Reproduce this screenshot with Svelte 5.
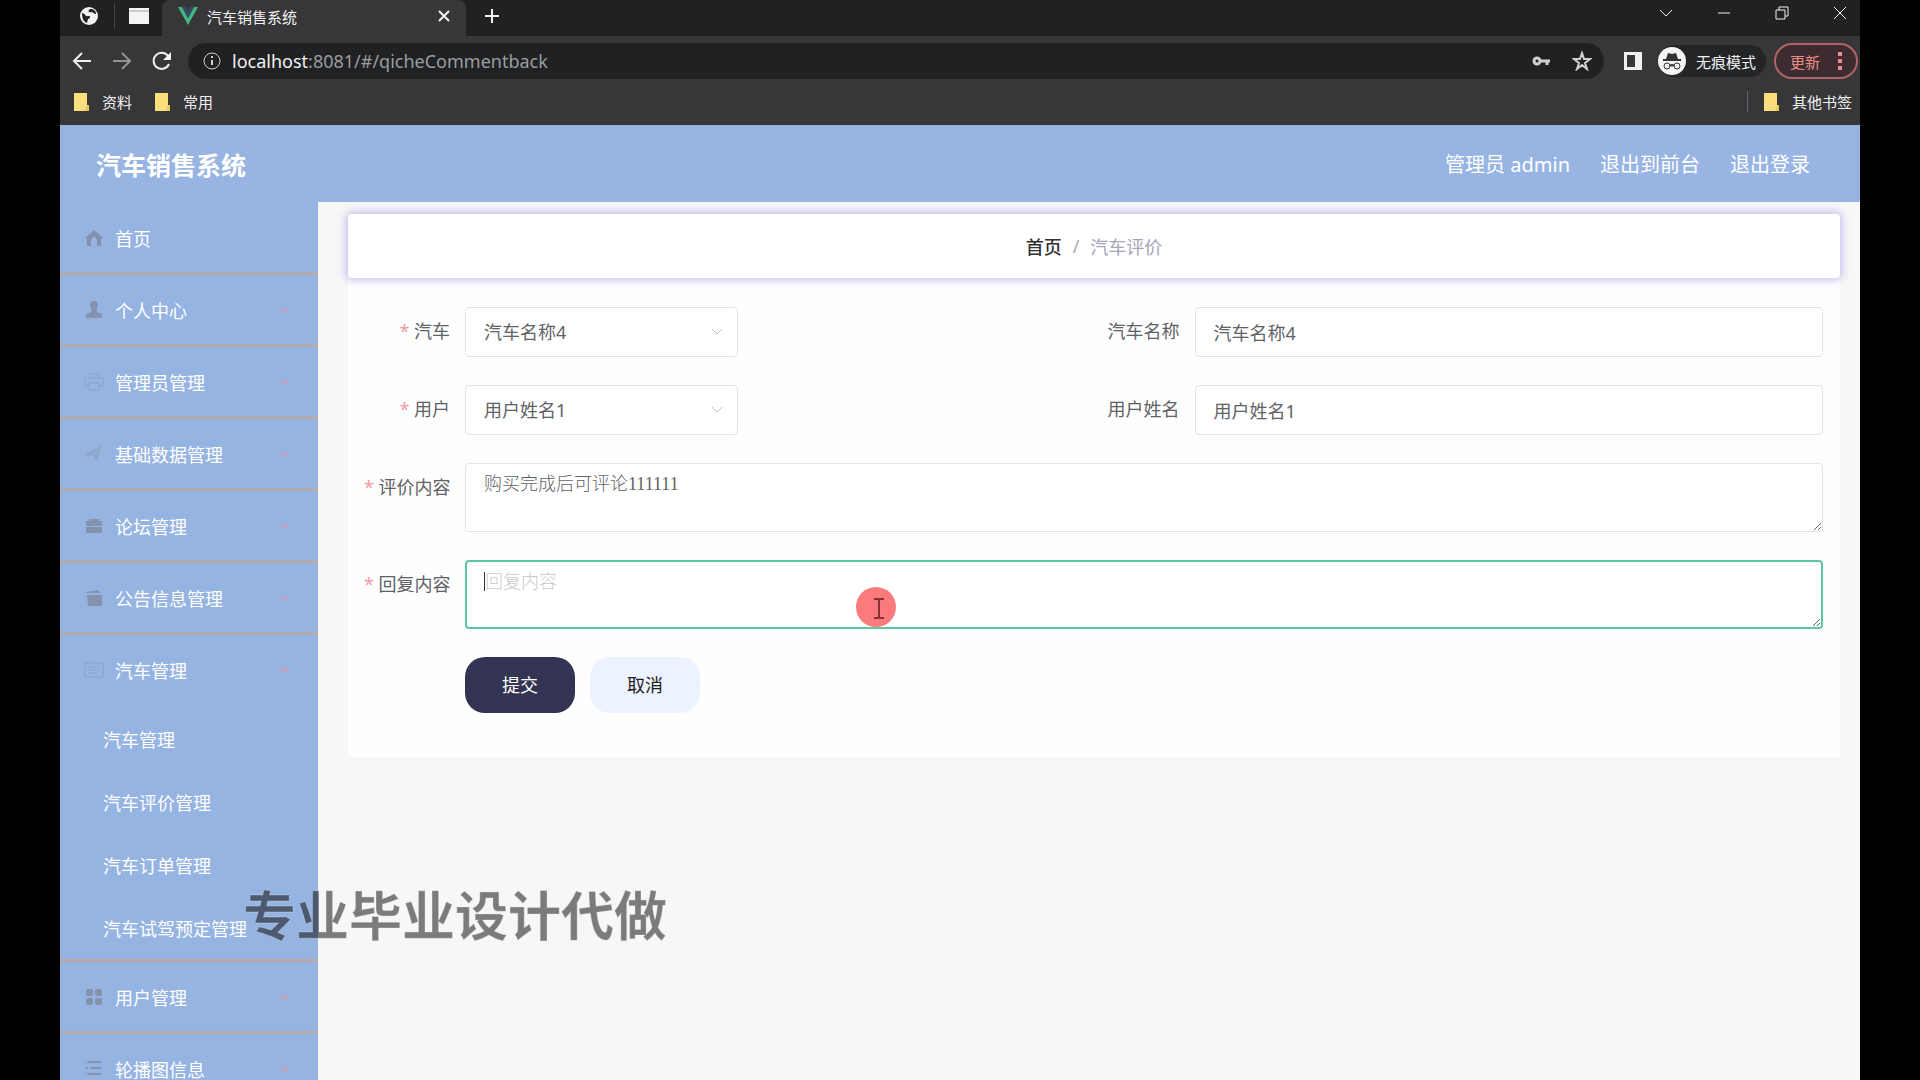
<script lang="ts">
  let car = $state('汽车名称4');
  let user = $state('用户姓名1');
  let comment = $state('购买完成后可评论111111');
  let reply = $state('');

  const menus = [
    { name: '首页', icon: 'home' },
    { name: '个人中心', icon: 'user', arrow: true },
    { name: '管理员管理', icon: 'print', arrow: true },
    { name: '基础数据管理', icon: 'send', arrow: true },
    { name: '论坛管理', icon: 'case', arrow: true },
    { name: '公告信息管理', icon: 'box', arrow: true },
    {
      name: '汽车管理',
      icon: 'card',
      arrow: true,
      open: true,
      children: ['汽车管理', '汽车评价管理', '汽车订单管理', '汽车试驾预定管理']
    },
    { name: '用户管理', icon: 'grid', arrow: true },
    { name: '轮播图信息', icon: 'list', arrow: true }
  ];
</script>

{#snippet folder()}
  <svg width="16" height="20" viewBox="0 0 16 20" aria-hidden="true">
    <path d="M0 1h13v12h2v6H0z" fill="#fbdf7c" />
    <path d="M13 13h2v6h-4z" fill="#e9c95c" />
  </svg>
{/snippet}

{#snippet menuIcon(name: string)}
  <svg class="menu-icon" viewBox="0 0 20 20" fill="currentColor" aria-hidden="true">
    {#if name === 'home'}
      <path d="M10 2 1 10l2 1v7h4v-6l3-4 3 4v6h4v-7l2-1z" />
    {:else if name === 'user'}
      <circle cx="10" cy="5" r="4" />
      <path d="M7 9h6v3l5 2v4H2v-4l5-2z" />
    {:else if name === 'print'}
      <path d="M5 6V2h10v4M5 14H1V6h18v8h-4M5 11h10v7H5z" fill="none" stroke="currentColor" opacity=".5" />
    {:else if name === 'send'}
      <path d="M18 2 1 10l6 2zM18 2 9 13l4 4z" opacity=".5" />
    {:else if name === 'case'}
      <path d="M5 5V3h10v2h3v5H2V5zM2 11h16v6H2z" />
    {:else if name === 'box'}
      <path d="m2 4 12-2 3 3H2zM3 7h15v11H4z" />
    {:else if name === 'card'}
      <path d="M1 3h18v14H1zM5 7h10M5 10h10M5 13h6" fill="none" stroke="currentColor" opacity=".5" />
    {:else if name === 'grid'}
      <rect x="2" y="2" width="7" height="7" rx="2" />
      <rect x="11" y="2" width="7" height="7" rx="2" />
      <rect x="2" y="11" width="7" height="7" rx="2" />
      <rect x="11" y="11" width="7" height="7" rx="2" />
    {:else}
      <path d="M4 3h13M2 3h1M6 9h11M2 9h2M4 15h13M2 15h1" fill="none" stroke="currentColor" stroke-width="2" />
    {/if}
  </svg>
{/snippet}

<div class="window">
  <div class="tabs">
    <button class="pinned" aria-label="固定标签页">
      <svg width="20" height="20" viewBox="0 0 20 20">
        <circle cx="10" cy="10" r="9" fill="#f1f1f1" />
        <path d="M3 7c3 0 3 4 7 3 2 0 1 3-1 3l-1 4c-3-1-5-4-5-10zM11 3c-2 1-2 4 1 3 2 0 3 2 5 2 0-3-2-5-6-5z" fill="#222423" />
      </svg>
    </button>
    <button class="pinned second" aria-label="固定标签页">
      <svg width="20" height="16" viewBox="0 0 20 16"><path d="M0 0h20v16H0z" fill="#f4f4f4" /><path d="M0 3h20" stroke="#ccc" /></svg>
    </button>
    <div class="tab">
      <svg width="20" height="18" viewBox="0 0 20 18" aria-hidden="true">
        <path d="M0 0h4l6 11 6-11h4L10 18z" fill="#41b883" />
        <path d="M4 0h4l2 4 2-4h4l-6 11z" fill="#35495e" />
      </svg>
      <span>汽车销售系统</span>
      <button aria-label="关闭标签页">
        <svg width="12" height="12" viewBox="0 0 12 12"><path d="m1 1 10 10M11 1 1 11" /></svg>
      </button>
    </div>
    <button class="new-tab" aria-label="新标签页">
      <svg width="16" height="16" viewBox="0 0 16 16"><path d="M8 1v14M1 8h14" /></svg>
    </button>
    <div class="controls">
      <button aria-label="搜索标签页"><svg width="14" height="14" viewBox="0 0 14 14"><path d="m1 4 6 6 6-6" /></svg></button>
      <button aria-label="最小化"><svg width="14" height="14" viewBox="0 0 14 14"><path d="M1 7h12" /></svg></button>
      <button aria-label="还原"><svg width="14" height="14" viewBox="0 0 14 14"><path d="M1 4h9v9H1zM4 4V1h9v9h-3" /></svg></button>
      <button aria-label="关闭"><svg width="14" height="14" viewBox="0 0 14 14"><path d="m1 1 12 12M13 1 1 13" /></svg></button>
    </div>
  </div>

  <div class="toolbar">
    <button aria-label="后退"><svg width="20" height="20" viewBox="0 0 20 20"><path d="M19 10H3M10 2l-8 8 8 8" /></svg></button>
    <button class="dim" aria-label="前进"><svg width="20" height="20" viewBox="0 0 20 20"><path d="M1 10h16M10 2l8 8-8 8" /></svg></button>
    <button aria-label="刷新">
      <svg width="20" height="20" viewBox="0 0 20 20"><path d="M17 13a8 8 0 1 1-1-8l2 2" /><path d="M19 1v8h-8z" fill="#f1f1f1" stroke="none" /></svg>
    </button>
    <div class="address">
      <svg width="18" height="18" viewBox="0 0 18 18"><circle cx="9" cy="9" r="8" /><path d="M9 8v5M9 4v2" stroke-width="2" /></svg>
      <div class="url"><b>localhost</b>:8081/#/qicheCommentback</div>
      <svg class="key" width="18" height="12" viewBox="0 0 18 12"><circle cx="5" cy="6" r="3" stroke-width="3" /><path d="M8 6h10M15 6v4" stroke-width="3" /></svg>
      <svg class="star" width="20" height="20" viewBox="0 0 20 20"><path d="m10 2 2 6h6l-5 4 2 6-5-4-5 4 2-6-5-4h6z" /></svg>
    </div>
    <button class="panel" aria-label="侧边栏">
      <svg width="18" height="18" viewBox="0 0 18 18"><path d="M0 0h18v18H0zM3 3v12h8V3z" fill="#f1f1f1" fill-rule="evenodd" stroke="none" /></svg>
    </button>
    <div class="incognito">
      <svg width="28" height="28" viewBox="0 0 28 28">
        <circle cx="14" cy="14" r="14" fill="#f4f4f4" stroke="none" />
        <path d="m10 6 4 1 4-1 2 6H8z" fill="#333" stroke="none" />
        <path d="M5 13h18M12 19q2-2 4 0" stroke="#333" stroke-width="2" />
        <circle cx="9" cy="19" r="3" stroke="#333" stroke-width="1" /><circle cx="19" cy="19" r="3" stroke="#333" stroke-width="1" />
      </svg>
      <span>无痕模式</span>
    </div>
    <button class="update">
      更新
      <svg width="4" height="18" viewBox="0 0 4 18"><path d="M0 0h4v4H0zM0 7h4v4H0zM0 14h4v4H0z" fill="#ea8b86" stroke="none" /></svg>
    </button>
  </div>

  <div class="bookmarks">
    <a href="#/">{@render folder()}资料</a>
    <a href="#/">{@render folder()}常用</a>
    <a class="other" href="#/">{@render folder()}其他书签</a>
  </div>

  <header>
    <h1>汽车销售系统</h1>
    <nav>
      <span>管理员 admin</span>
      <a href="#/front">退出到前台</a>
      <a href="#/login">退出登录</a>
    </nav>
  </header>

  <div class="body">
    <aside>
      {#each menus as menu (menu.name)}
        <a class="menu" class:open={menu.open} href="#/">
          {@render menuIcon(menu.icon)}
          <span>{menu.name}</span>
          {#if menu.arrow}
            <svg class="arrow" class:up={menu.open} width="10" height="6" viewBox="0 0 10 6" aria-hidden="true"><path d="m1 1 4 4 4-4" /></svg>
          {/if}
        </a>
        {#if menu.children}
          <div class="submenu">
            {#each menu.children as child (child)}
              <a href="#/qicheCommentback">{child}</a>
            {/each}
          </div>
        {/if}
      {/each}
    </aside>

    <main>
      <div class="breadcrumb">
        <a href="#/">首页</a>
        <i>/</i>
        <span>汽车评价</span>
      </div>
      <form>
        <div class="pair">
          <div class="field">
            <label class="required" for="car">汽车</label>
            <div class="select">
              <select id="car" bind:value={car}>
                <option>汽车名称4</option>
              </select>
              <svg width="12" height="8" viewBox="0 0 12 8" aria-hidden="true"><path d="m1 1 5 5 5-5" /></svg>
            </div>
          </div>
          <div class="field">
            <label for="car-name">汽车名称</label>
            <input id="car-name" value={car} readonly />
          </div>
        </div>
        <div class="pair">
          <div class="field">
            <label class="required" for="user">用户</label>
            <div class="select">
              <select id="user" bind:value={user}>
                <option>用户姓名1</option>
              </select>
              <svg width="12" height="8" viewBox="0 0 12 8" aria-hidden="true"><path d="m1 1 5 5 5-5" /></svg>
            </div>
          </div>
          <div class="field">
            <label for="user-name">用户姓名</label>
            <input id="user-name" value={user} readonly />
          </div>
        </div>
        <div class="field">
          <label class="required" for="comment">评价内容</label>
          <textarea id="comment" bind:value={comment}></textarea>
        </div>
        <div class="field active">
          <label class="required" for="reply">回复内容</label>
          <textarea id="reply" placeholder="回复内容" bind:value={reply}></textarea>
          <span class="caret"></span>
          <svg class="pointer" width="40" height="40" viewBox="0 0 40 40" aria-hidden="true">
            <circle cx="20" cy="20" r="20" fill="#fb7b7c" />
            <path d="M18 12h4l1 1 1-1h4M18 31h4l1-1 1 1h4M23 13v17" fill="none" stroke="#8a2f38" stroke-width="2" />
          </svg>
        </div>
        <div class="actions">
          <button type="button" class="submit">提交</button>
          <button type="button" class="cancel">取消</button>
        </div>
      </form>
    </main>
  </div>

  <div class="watermark">专业毕业设计代做</div>
</div>

<style>
  :global(body) {
    background: #000;
    overflow: hidden;
  }

  .window {
    position: relative;
    display: flex;
    flex-direction: column;
    box-sizing: border-box;
    height: 100vh;
    margin: 0 60px;
    overflow: hidden;
    background: #f7f7f7;
    font-family: 'Noto Sans', 'Noto Sans CJK SC', sans-serif;
    font-size: 18px;
  }

  .window * {
    box-sizing: border-box;
  }

  button,
  input,
  select,
  textarea {
    font: inherit;
  }

  a {
    color: inherit;
    text-decoration: none;
  }

  .tabs,
  .toolbar,
  .bookmarks {
    display: flex;
    flex: none;
    align-items: center;
    color: #f1f1f1;
    font-size: 15px;
  }

  .tabs button,
  .toolbar button {
    display: flex;
    align-items: center;
    justify-content: center;
    padding: 0;
    border: 0;
    background: none;
    color: inherit;
  }

  .tabs {
    height: 36px;
    background: #1f2221;
  }

  .tabs svg,
  .toolbar svg {
    flex: none;
    fill: none;
    stroke: #f1f1f1;
    stroke-width: 2;
  }

  .tab > svg,
  .tabs .pinned svg {
    stroke: none;
  }

  .tabs .pinned {
    width: 54px;
    height: 26px;
    margin-bottom: 4px;
    padding-left: 3px;
  }

  .tabs .second {
    width: 48px;
    padding: 0;
    border-left: 1px solid #444;
  }

  .tab {
    display: flex;
    align-items: center;
    gap: 9px;
    width: 304px;
    height: 36px;
    padding: 0 16px 4px;
    border-radius: 8px 8px 0 0;
    background: #37373a;
  }

  .tab button {
    margin-left: auto;
  }

  .tabs .new-tab {
    width: 52px;
    padding-bottom: 4px;
  }

  .controls {
    display: flex;
    gap: 44px;
    margin-left: auto;
    padding: 0 13px 10px 0;
  }

  .controls svg {
    stroke-width: 1;
  }

  .toolbar {
    gap: 20px;
    height: 50px;
    padding: 0 2px 0 12px;
    background: #37373a;
  }

  .toolbar .dim {
    opacity: 0.5;
  }

  .address {
    display: flex;
    flex: 1;
    align-items: center;
    gap: 11px;
    height: 36px;
    margin-left: -4px;
    padding: 0 12px 0 15px;
    border-radius: 18px;
    background: #202123;
  }

  .address svg {
    stroke: #d0d0d0;
    stroke-width: 1;
  }

  .address .star {
    stroke-width: 2;
  }

  .address .key {
    margin-right: 11px;
  }

  .url {
    flex: 1;
    color: #9b9c9e;
    font-size: 18px;
  }

  .url b {
    color: #f1f1f1;
    font-weight: 400;
  }

  .toolbar .update {
    gap: 18px;
    width: 84px;
    height: 36px;
    margin-left: -12px;
    border: 2px solid #b06468;
    border-radius: 18px;
    background: #3c2c2f;
    color: #ea8b86;
  }

  .incognito {
    display: flex;
    align-items: center;
    gap: 10px;
    height: 32px;
    margin-left: -4px;
    padding-right: 10px;
    border-radius: 16px;
    background: #242527;
  }

  .bookmarks {
    gap: 23px;
    height: 39px;
    padding: 0 8px 8px 14px;
    background: #37373a;
  }

  .bookmarks a {
    display: flex;
    align-items: center;
    gap: 12px;
  }

  .bookmarks .other {
    margin-left: auto;
    padding-left: 16px;
    border-left: 1px solid #66666a;
  }

  header {
    display: flex;
    flex: none;
    align-items: center;
    justify-content: space-between;
    height: 77px;
    padding: 0 50px 0 36px;
    background: #98b4e2;
    color: #fff;
  }

  h1 {
    margin: 0;
    font-size: 25px;
  }

  nav {
    display: flex;
    gap: 30px;
    font-size: 20px;
  }

  .body {
    display: flex;
    flex: 1;
    min-height: 0;
  }

  aside {
    flex: none;
    width: 258px;
    padding-top: 1px;
    background: #96b4e2;
    color: #fff;
  }

  .menu {
    display: flex;
    align-items: center;
    height: 72px;
    padding: 0 28px 0 24px;
    border-bottom: 3px solid #b3abb0;
  }

  .menu.open {
    border-bottom-color: transparent;
  }

  .menu-icon {
    width: 20px;
    height: 20px;
    margin-right: 11px;
    color: #8492ad;
  }

  .arrow {
    margin-left: auto;
    fill: none;
    stroke: #c79eb8;
    stroke-width: 2;
  }

  .arrow.up {
    transform: rotate(180deg);
  }

  .submenu {
    border-bottom: 3px solid #b8a9a5;
  }

  .submenu a {
    display: flex;
    align-items: center;
    height: 63px;
    padding-left: 43px;
  }

  main {
    flex: 1;
    min-width: 0;
    padding: 12px 20px 0 30px;
  }

  .breadcrumb {
    position: relative;
    display: flex;
    align-items: center;
    justify-content: center;
    gap: 11px;
    height: 64px;
    border-radius: 4px;
    background: #fff;
    box-shadow: 0 0 8px 2px #c3bcee;
    color: #a5a5b8;
  }

  .breadcrumb a {
    color: #303133;
    font-weight: 500;
  }

  .breadcrumb i {
    color: #a8abb2;
    font-style: normal;
  }

  form {
    display: grid;
    gap: 28px;
    padding: 29px 17px 44px 16px;
    background: #fefefe;
    color: #606266;
  }

  .pair {
    display: grid;
    grid-template-columns: 1fr 1fr;
  }

  .field {
    position: relative;
    display: flex;
  }

  label {
    flex: none;
    width: 101px;
    padding-right: 15px;
    line-height: 48px;
    text-align: right;
    white-space: nowrap;
  }

  .required::before {
    content: '* ';
    color: #f39aa8;
  }

  input,
  select,
  textarea {
    width: 100%;
    height: 50px;
    padding: 0 18px;
    border: 1px solid #e2e3e6;
    border-radius: 4px;
    outline: none;
    background: #fff;
    color: #606266;
  }

  select {
    appearance: none;
  }

  textarea {
    height: 69px;
    padding: 7px 18px;
    font-family: 'Liberation Serif', 'Noto Sans CJK SC', serif;
    font-weight: 300;
    line-height: 27px;
    resize: vertical;
  }

  textarea::placeholder {
    color: #c8cacf;
  }

  .active textarea {
    border: 2px solid #5cc7a0;
  }

  .select {
    position: relative;
    width: 273px;
  }

  .select svg {
    position: absolute;
    top: 21px;
    right: 15px;
    fill: none;
    stroke: #c0c4cc;
  }

  .caret {
    position: absolute;
    top: 12px;
    left: 120px;
    width: 1px;
    height: 19px;
    background: #333;
  }

  .pointer {
    position: absolute;
    top: 27px;
    left: 492px;
  }

  .actions {
    display: flex;
    gap: 15px;
    padding-left: 101px;
  }

  .actions button {
    width: 110px;
    height: 56px;
    padding: 0 0 2px;
    border: 0;
    border-radius: 20px;
  }

  .actions .submit {
    background: #333454;
    color: #fff;
  }

  .actions .cancel {
    background: #ecf3fe;
    color: #222;
  }

  .watermark {
    position: absolute;
    top: 876px;
    left: 183px;
    color: rgba(0, 0, 0, 0.5);
    font-size: 53px;
    font-weight: 700;
    line-height: 80px;
    -webkit-text-stroke: 1px rgba(240, 240, 240, 0.3);
    pointer-events: none;
  }
</style>
